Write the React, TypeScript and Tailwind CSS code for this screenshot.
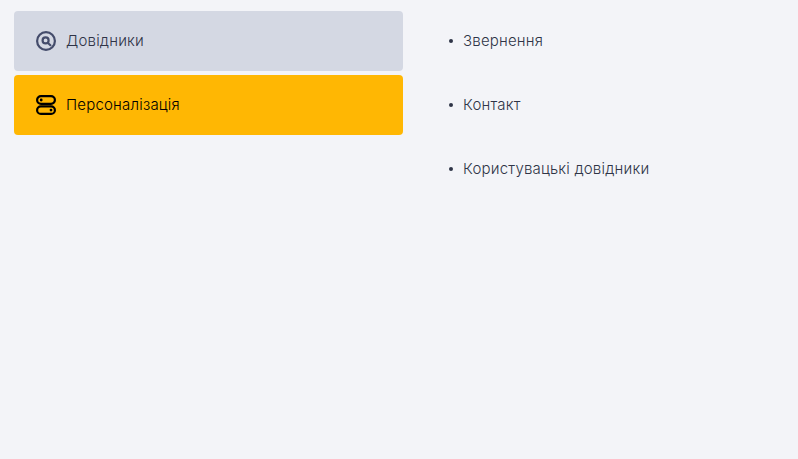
const menu = ["Звернення", "Контакт", "Користувацькі довідники"];

function SearchIcon() {
  return (
    <svg width="20" height="20" viewBox="0 0 20 20" fill="none" stroke="#444c6b">
      <circle cx="10" cy="10" r="8.9" strokeWidth="2.2" />
      <circle cx="9.6" cy="9.4" r="3" strokeWidth="2.2" />
      <path d="M12 12l2.4 2.2" strokeWidth="2.2" strokeLinecap="round" />
    </svg>
  );
}

function ServerIcon() {
  return (
    <svg width="20" height="20" viewBox="0 0 20 20" fill="none" stroke="#000">
      <rect x="1.1" y="1.1" width="17.8" height="7.8" rx="3.9" strokeWidth="2.2" />
      <rect x="1.1" y="11.4" width="17.8" height="7.5" rx="3.75" strokeWidth="2.2" />
      <circle cx="5.2" cy="5" r="1.4" fill="#000" stroke="none" />
      <circle cx="15" cy="15.1" r="1.4" fill="#000" stroke="none" />
    </svg>
  );
}

export default function App() {
  return (
    <div className="flex min-h-[459px] w-full bg-[#f3f4f8] font-['Inter',sans-serif] text-[15px] font-light tracking-[0.2px]">
      <div className="ml-[14px] flex w-[389px] flex-col gap-1 pt-[11px]">
        <div className="flex h-[60px] items-center gap-[10px] rounded bg-[#d4d8e3] pl-[22px] text-[#2f3447]">
          <SearchIcon />
          <span>Довідники</span>
        </div>
        <div className="flex h-[60px] items-center gap-[10px] rounded bg-[#ffb703] pl-[22px] text-black">
          <ServerIcon />
          <span>Персоналізація</span>
        </div>
      </div>
      <ul className="ml-[46px] flex list-none flex-col pt-[9px] text-[#2f3447]">
        {menu.map((item) => (
          <li key={item} className="flex h-[64px] items-center gap-[10px]">
            <span className="h-1 w-1 rounded-full bg-[#2f3447]" />
            <span>{item}</span>
          </li>
        ))}
      </ul>
    </div>
  );
}
